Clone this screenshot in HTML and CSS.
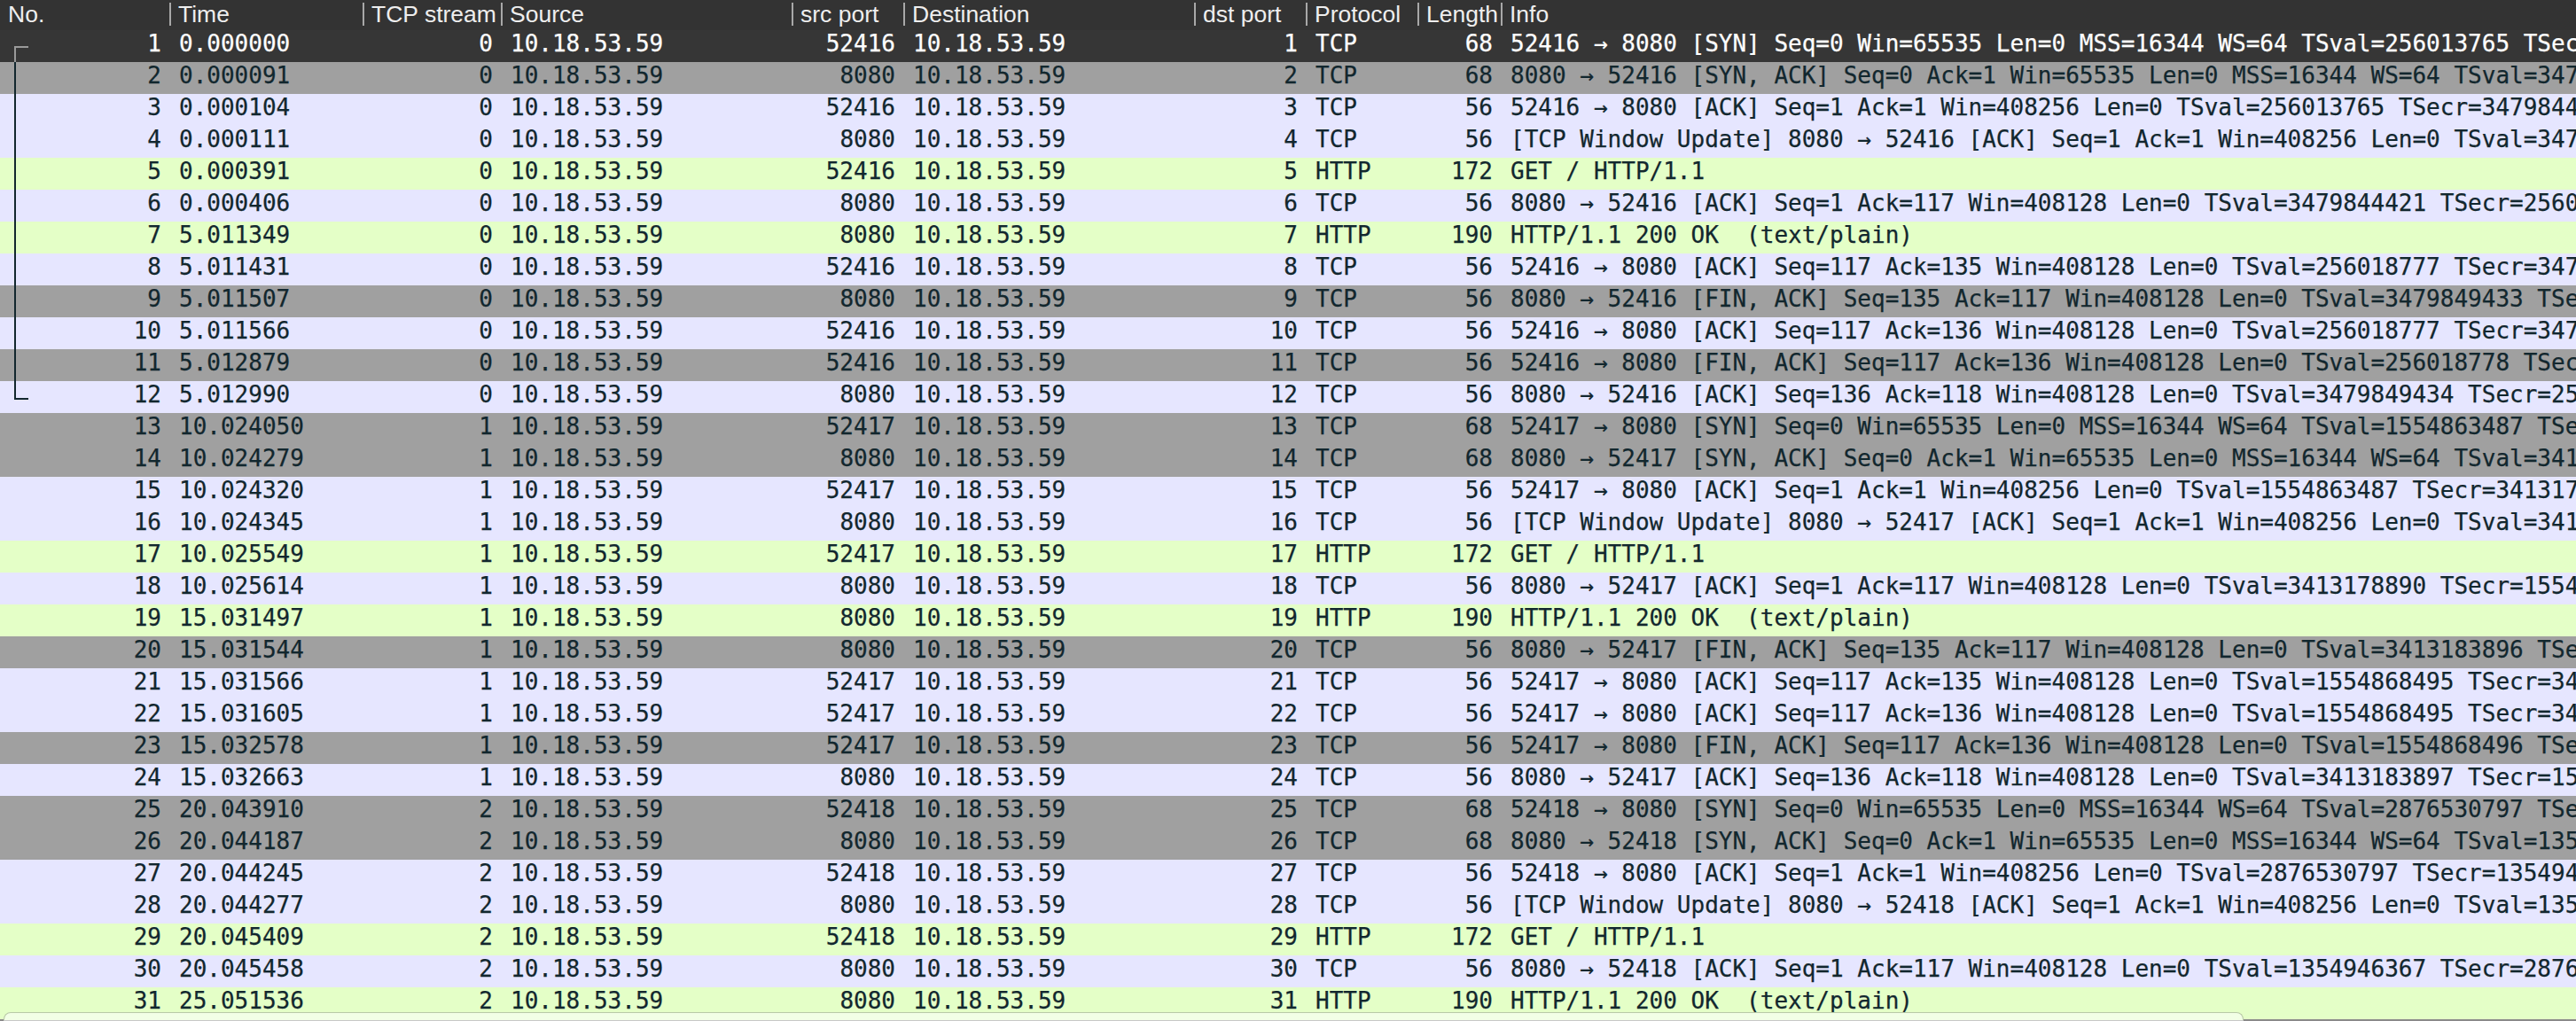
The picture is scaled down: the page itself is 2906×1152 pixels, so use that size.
FILE: index.html
```html
<!DOCTYPE html>
<html lang="en">
<head>
<meta charset="utf-8">
<title>Wireshark packet list</title>
<link rel="stylesheet" href="styles.css">
</head>
<body>
<div class="list">
<div class="head">
<div class="hc">No.</div><div class="hc sep">Time</div><div class="hc sep wide">TCP stream</div><div class="hc sep">Source</div><div class="hc sep">src port</div><div class="hc sep">Destination</div><div class="hc sep">dst port</div><div class="hc sep">Protocol</div><div class="hc sep">Length</div><div class="hc sep">Info</div>
</div>
<div class="row sel"><span class="r">1</span><span>0.000000</span><span class="r">0</span><span>10.18.53.59</span><span class="r">52416</span><span>10.18.53.59</span><span class="r">1</span><span>TCP</span><span class="r">68</span><span>52416 → 8080 [SYN] Seq=0 Win=65535 Len=0 MSS=16344 WS=64 TSval=256013765 TSecr=0</span></div>
<div class="row gray"><span class="r">2</span><span>0.000091</span><span class="r">0</span><span>10.18.53.59</span><span class="r">8080</span><span>10.18.53.59</span><span class="r">2</span><span>TCP</span><span class="r">68</span><span>8080 → 52416 [SYN, ACK] Seq=0 Ack=1 Win=65535 Len=0 MSS=16344 WS=64 TSval=3479844</span></div>
<div class="row tcp"><span class="r">3</span><span>0.000104</span><span class="r">0</span><span>10.18.53.59</span><span class="r">52416</span><span>10.18.53.59</span><span class="r">3</span><span>TCP</span><span class="r">56</span><span>52416 → 8080 [ACK] Seq=1 Ack=1 Win=408256 Len=0 TSval=256013765 TSecr=3479844421</span></div>
<div class="row tcp"><span class="r">4</span><span>0.000111</span><span class="r">0</span><span>10.18.53.59</span><span class="r">8080</span><span>10.18.53.59</span><span class="r">4</span><span>TCP</span><span class="r">56</span><span>[TCP Window Update] 8080 → 52416 [ACK] Seq=1 Ack=1 Win=408256 Len=0 TSval=3479844</span></div>
<div class="row http"><span class="r">5</span><span>0.000391</span><span class="r">0</span><span>10.18.53.59</span><span class="r">52416</span><span>10.18.53.59</span><span class="r">5</span><span>HTTP</span><span class="r">172</span><span>GET / HTTP/1.1</span></div>
<div class="row tcp"><span class="r">6</span><span>0.000406</span><span class="r">0</span><span>10.18.53.59</span><span class="r">8080</span><span>10.18.53.59</span><span class="r">6</span><span>TCP</span><span class="r">56</span><span>8080 → 52416 [ACK] Seq=1 Ack=117 Win=408128 Len=0 TSval=3479844421 TSecr=25601376</span></div>
<div class="row http"><span class="r">7</span><span>5.011349</span><span class="r">0</span><span>10.18.53.59</span><span class="r">8080</span><span>10.18.53.59</span><span class="r">7</span><span>HTTP</span><span class="r">190</span><span>HTTP/1.1 200 OK  (text/plain)</span></div>
<div class="row tcp"><span class="r">8</span><span>5.011431</span><span class="r">0</span><span>10.18.53.59</span><span class="r">52416</span><span>10.18.53.59</span><span class="r">8</span><span>TCP</span><span class="r">56</span><span>52416 → 8080 [ACK] Seq=117 Ack=135 Win=408128 Len=0 TSval=256018777 TSecr=3479849</span></div>
<div class="row gray"><span class="r">9</span><span>5.011507</span><span class="r">0</span><span>10.18.53.59</span><span class="r">8080</span><span>10.18.53.59</span><span class="r">9</span><span>TCP</span><span class="r">56</span><span>8080 → 52416 [FIN, ACK] Seq=135 Ack=117 Win=408128 Len=0 TSval=3479849433 TSecr=2</span></div>
<div class="row tcp"><span class="r">10</span><span>5.011566</span><span class="r">0</span><span>10.18.53.59</span><span class="r">52416</span><span>10.18.53.59</span><span class="r">10</span><span>TCP</span><span class="r">56</span><span>52416 → 8080 [ACK] Seq=117 Ack=136 Win=408128 Len=0 TSval=256018777 TSecr=3479849</span></div>
<div class="row gray"><span class="r">11</span><span>5.012879</span><span class="r">0</span><span>10.18.53.59</span><span class="r">52416</span><span>10.18.53.59</span><span class="r">11</span><span>TCP</span><span class="r">56</span><span>52416 → 8080 [FIN, ACK] Seq=117 Ack=136 Win=408128 Len=0 TSval=256018778 TSecr=34</span></div>
<div class="row tcp"><span class="r">12</span><span>5.012990</span><span class="r">0</span><span>10.18.53.59</span><span class="r">8080</span><span>10.18.53.59</span><span class="r">12</span><span>TCP</span><span class="r">56</span><span>8080 → 52416 [ACK] Seq=136 Ack=118 Win=408128 Len=0 TSval=3479849434 TSecr=25601877</span></div>
<div class="row gray"><span class="r">13</span><span>10.024050</span><span class="r">1</span><span>10.18.53.59</span><span class="r">52417</span><span>10.18.53.59</span><span class="r">13</span><span>TCP</span><span class="r">68</span><span>52417 → 8080 [SYN] Seq=0 Win=65535 Len=0 MSS=16344 WS=64 TSval=1554863487 TSecr=0</span></div>
<div class="row gray"><span class="r">14</span><span>10.024279</span><span class="r">1</span><span>10.18.53.59</span><span class="r">8080</span><span>10.18.53.59</span><span class="r">14</span><span>TCP</span><span class="r">68</span><span>8080 → 52417 [SYN, ACK] Seq=0 Ack=1 Win=65535 Len=0 MSS=16344 WS=64 TSval=3413178</span></div>
<div class="row tcp"><span class="r">15</span><span>10.024320</span><span class="r">1</span><span>10.18.53.59</span><span class="r">52417</span><span>10.18.53.59</span><span class="r">15</span><span>TCP</span><span class="r">56</span><span>52417 → 8080 [ACK] Seq=1 Ack=1 Win=408256 Len=0 TSval=1554863487 TSecr=3413178890</span></div>
<div class="row tcp"><span class="r">16</span><span>10.024345</span><span class="r">1</span><span>10.18.53.59</span><span class="r">8080</span><span>10.18.53.59</span><span class="r">16</span><span>TCP</span><span class="r">56</span><span>[TCP Window Update] 8080 → 52417 [ACK] Seq=1 Ack=1 Win=408256 Len=0 TSval=3413178</span></div>
<div class="row http"><span class="r">17</span><span>10.025549</span><span class="r">1</span><span>10.18.53.59</span><span class="r">52417</span><span>10.18.53.59</span><span class="r">17</span><span>HTTP</span><span class="r">172</span><span>GET / HTTP/1.1</span></div>
<div class="row tcp"><span class="r">18</span><span>10.025614</span><span class="r">1</span><span>10.18.53.59</span><span class="r">8080</span><span>10.18.53.59</span><span class="r">18</span><span>TCP</span><span class="r">56</span><span>8080 → 52417 [ACK] Seq=1 Ack=117 Win=408128 Len=0 TSval=3413178890 TSecr=155486348</span></div>
<div class="row http"><span class="r">19</span><span>15.031497</span><span class="r">1</span><span>10.18.53.59</span><span class="r">8080</span><span>10.18.53.59</span><span class="r">19</span><span>HTTP</span><span class="r">190</span><span>HTTP/1.1 200 OK  (text/plain)</span></div>
<div class="row gray"><span class="r">20</span><span>15.031544</span><span class="r">1</span><span>10.18.53.59</span><span class="r">8080</span><span>10.18.53.59</span><span class="r">20</span><span>TCP</span><span class="r">56</span><span>8080 → 52417 [FIN, ACK] Seq=135 Ack=117 Win=408128 Len=0 TSval=3413183896 TSecr=1</span></div>
<div class="row tcp"><span class="r">21</span><span>15.031566</span><span class="r">1</span><span>10.18.53.59</span><span class="r">52417</span><span>10.18.53.59</span><span class="r">21</span><span>TCP</span><span class="r">56</span><span>52417 → 8080 [ACK] Seq=117 Ack=135 Win=408128 Len=0 TSval=1554868495 TSecr=3413183</span></div>
<div class="row tcp"><span class="r">22</span><span>15.031605</span><span class="r">1</span><span>10.18.53.59</span><span class="r">52417</span><span>10.18.53.59</span><span class="r">22</span><span>TCP</span><span class="r">56</span><span>52417 → 8080 [ACK] Seq=117 Ack=136 Win=408128 Len=0 TSval=1554868495 TSecr=3413183</span></div>
<div class="row gray"><span class="r">23</span><span>15.032578</span><span class="r">1</span><span>10.18.53.59</span><span class="r">52417</span><span>10.18.53.59</span><span class="r">23</span><span>TCP</span><span class="r">56</span><span>52417 → 8080 [FIN, ACK] Seq=117 Ack=136 Win=408128 Len=0 TSval=1554868496 TSecr=3</span></div>
<div class="row tcp"><span class="r">24</span><span>15.032663</span><span class="r">1</span><span>10.18.53.59</span><span class="r">8080</span><span>10.18.53.59</span><span class="r">24</span><span>TCP</span><span class="r">56</span><span>8080 → 52417 [ACK] Seq=136 Ack=118 Win=408128 Len=0 TSval=3413183897 TSecr=155486</span></div>
<div class="row gray"><span class="r">25</span><span>20.043910</span><span class="r">2</span><span>10.18.53.59</span><span class="r">52418</span><span>10.18.53.59</span><span class="r">25</span><span>TCP</span><span class="r">68</span><span>52418 → 8080 [SYN] Seq=0 Win=65535 Len=0 MSS=16344 WS=64 TSval=2876530797 TSecr=0</span></div>
<div class="row gray"><span class="r">26</span><span>20.044187</span><span class="r">2</span><span>10.18.53.59</span><span class="r">8080</span><span>10.18.53.59</span><span class="r">26</span><span>TCP</span><span class="r">68</span><span>8080 → 52418 [SYN, ACK] Seq=0 Ack=1 Win=65535 Len=0 MSS=16344 WS=64 TSval=1354946</span></div>
<div class="row tcp"><span class="r">27</span><span>20.044245</span><span class="r">2</span><span>10.18.53.59</span><span class="r">52418</span><span>10.18.53.59</span><span class="r">27</span><span>TCP</span><span class="r">56</span><span>52418 → 8080 [ACK] Seq=1 Ack=1 Win=408256 Len=0 TSval=2876530797 TSecr=1354946367</span></div>
<div class="row tcp"><span class="r">28</span><span>20.044277</span><span class="r">2</span><span>10.18.53.59</span><span class="r">8080</span><span>10.18.53.59</span><span class="r">28</span><span>TCP</span><span class="r">56</span><span>[TCP Window Update] 8080 → 52418 [ACK] Seq=1 Ack=1 Win=408256 Len=0 TSval=1354946</span></div>
<div class="row http"><span class="r">29</span><span>20.045409</span><span class="r">2</span><span>10.18.53.59</span><span class="r">52418</span><span>10.18.53.59</span><span class="r">29</span><span>HTTP</span><span class="r">172</span><span>GET / HTTP/1.1</span></div>
<div class="row tcp"><span class="r">30</span><span>20.045458</span><span class="r">2</span><span>10.18.53.59</span><span class="r">8080</span><span>10.18.53.59</span><span class="r">30</span><span>TCP</span><span class="r">56</span><span>8080 → 52418 [ACK] Seq=1 Ack=117 Win=408128 Len=0 TSval=1354946367 TSecr=287653079</span></div>
<div class="row http"><span class="r">31</span><span>25.051536</span><span class="r">2</span><span>10.18.53.59</span><span class="r">8080</span><span>10.18.53.59</span><span class="r">31</span><span>HTTP</span><span class="r">190</span><span>HTTP/1.1 200 OK  (text/plain)</span></div>
<div class="bracket"></div>
<div class="bracket-top"></div>
<div class="tab"></div>
</div>
</body>
</html>
```

FILE: styles.css
```css
html, body {
  margin: 0;
  padding: 0;
  height: 100%;
  overflow: hidden;
  background: #8a8a8a;
}

.list {
  position: relative;
  width: 2906px;
  height: 1152px;
  overflow: hidden;
}

.head, .row {
  display: grid;
  grid-template-columns: 191px 218px 156px 328px 126px 328px 126px 126px 94px 1213px;
}

.head {
  height: 34px;
  align-items: start;
  background: #333333;
}

.hc {
  height: 30px;
  margin-top: 1px;
  padding-left: 9px;
  padding-right: 9px;
  overflow-x: clip;
  white-space: nowrap;
  font: 26.5px/30px "Liberation Sans", sans-serif;
  color: #eeeeee;
}

.sep {
  padding-left: 10px;
  background: linear-gradient(#a8a8a8, #a8a8a8) no-repeat 0 2px / 2px 26px;
}

.wide {
  padding-right: 4px;
}

.row {
  height: 36px;
  font: 26px/30px "DejaVu Sans Mono", monospace;
  color: #12272e;
  white-space: pre;
  -webkit-text-stroke: 0.25px currentColor;
}

.row span {
  display: block;
  overflow-x: clip;
  padding-left: 11px;
}

.row .r {
  padding-left: 0;
  padding-right: 9px;
  text-align: right;
}

.sel { background: #363636; color: #ffffff; }
.gray { background: #a0a0a0; }
.tcp { background: #e6e6ff; }
.http { background: #e4ffc7; }

.bracket {
  position: absolute;
  left: 16px;
  top: 70px;
  width: 14px;
  height: 379px;
  border-left: 2px solid #12272e;
  border-bottom: 2px solid #12272e;
}

.bracket-top {
  position: absolute;
  left: 16px;
  top: 52px;
  width: 16px;
  height: 18px;
  box-sizing: border-box;
  border-left: 2px solid #9a9a9a;
  border-top: 2px solid #9a9a9a;
}

.tab {
  position: absolute;
  left: 4px;
  top: 1142px;
  width: 2525px;
  height: 8px;
  border: 1px solid #b9c9a8;
  border-bottom: 0;
  border-radius: 8px 8px 0 0;
  background: #f2ffe6;
  box-shadow: 0 2px 0 #c8c8c8;
}
```
